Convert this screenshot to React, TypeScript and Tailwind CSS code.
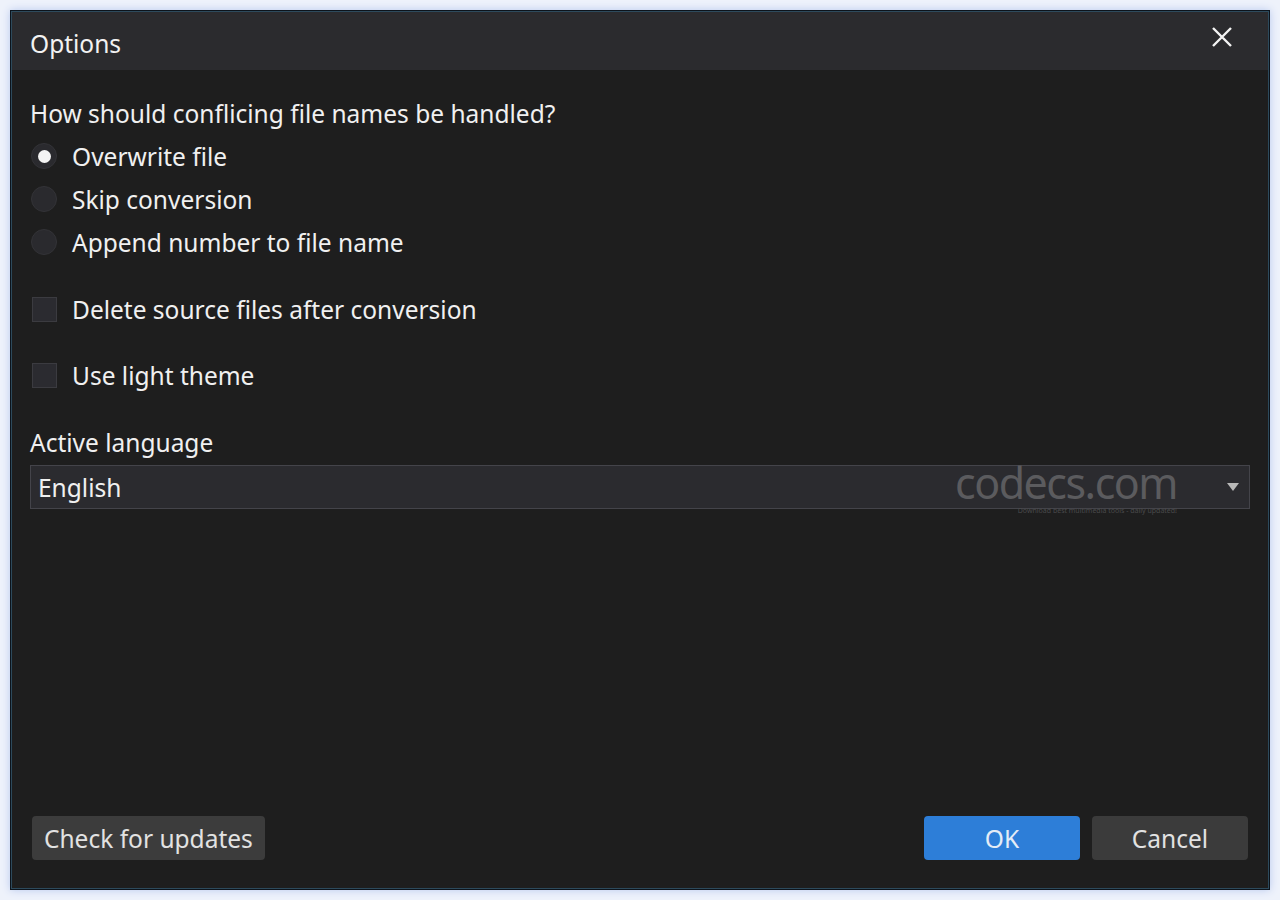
import { useState } from "react";

const font = { fontFamily: '"Noto Sans", "Open Sans", sans-serif' };

const Radio = ({ checked, label, onClick }: { checked: boolean; label: string; onClick: () => void }) => (
  <div className="flex items-center h-[43px] cursor-pointer" onClick={onClick}>
    <div className="w-[26px] h-[26px] rounded-full bg-[#2a2a2e] border border-[#333337] flex items-center justify-center ml-[1px] -mt-[3px]">
      {checked && <div className="w-[13px] h-[13px] rounded-full bg-[#f4f4f4]" />}
    </div>
    <span className="ml-[15px] text-[24.5px] text-[#f0f0f0]">{label}</span>
  </div>
);

const Check = ({ label }: { label: string }) => {
  const [on, setOn] = useState(false);
  return (
    <div className="flex items-center h-[43px] cursor-pointer" onClick={() => setOn(!on)}>
      <div className="w-[25px] h-[25px] bg-[#2b2b30] border border-[#3b3b40] ml-[2px] -mt-[3px] flex items-center justify-center text-white text-sm">
        {on ? "✓" : ""}
      </div>
      <span className="ml-[15px] text-[24.5px] text-[#f0f0f0]">{label}</span>
    </div>
  );
};

export default function App() {
  const [mode, setMode] = useState(0);
  const options = ["Overwrite file", "Skip conversion", "Append number to file name"];

  return (
    <div className="w-[1280px] h-[900px] bg-[#eef2fb] pt-[10px] pl-[10px]" style={font}>
      <div className="w-[1260px] h-[880px] border border-[#0c141c] shadow-[0_0_8px_#b8c8ee]">
        <div className="w-full h-full border border-[#2d4a5c] flex flex-col bg-[#1e1e1e]">
          {/* title bar */}
          <div className="h-[58px] bg-[#2b2b2e] flex items-center justify-between pl-[18px] pr-[36px]">
            <span className="text-[24.5px] text-[#f2f2f2] mt-[7px]">Options</span>
            <svg width="20" height="20" viewBox="0 0 20 20" className="mb-[8px]">
              <path d="M1 1 L19 19 M19 1 L1 19" stroke="#f4f4f4" strokeWidth="2.4" />
            </svg>
          </div>

          <div className="flex-1 flex flex-col px-[18px] pt-[23px]">
            <div className="text-[24.5px] text-[#f0f0f0] h-[43px] flex items-center">
              How should conflicing file names be handled?
            </div>
            {options.map((o, i) => (
              <Radio key={o} label={o} checked={mode === i} onClick={() => setMode(i)} />
            ))}
            <div className="mt-[24px]">
              <Check label="Delete source files after conversion" />
            </div>
            <div className="mt-[23px]">
              <Check label="Use light theme" />
            </div>
            <div className="text-[24.5px] text-[#f0f0f0] h-[43px] flex items-center mt-[24px]">
              Active language
            </div>
            <div className="relative h-[44px] bg-[#2b2b2f] border border-[#44444a] flex items-center justify-between pl-[7px] pr-[10px]">
              <span className="text-[24.5px] text-[#f0f0f0] mt-[2px]">English</span>
              <svg width="12" height="8" viewBox="0 0 12 8">
                <path d="M0 0 L12 0 L6 8 Z" fill="#b8b8b8" />
              </svg>
              {/* watermark */}
              <div className="absolute left-[920px] top-[-5px] w-[226px] flex flex-col items-end pointer-events-none">
                <span className="text-[43px] leading-[44px] text-[#5b5b5e] tracking-[-1.5px]">codecs.com</span>
                <span className="text-[7px] leading-[8px] text-[#4a4a4c] mt-[2px]">
                  Download best multimedia tools - daily updated!
                </span>
              </div>
            </div>

            <div className="flex-1" />

            <div className="flex items-center justify-between pb-[28px] pl-[2px] pr-[2px]">
              <button className="h-[44px] px-[12px] pt-[3px] bg-[#3c3c3c] rounded-[4px] text-[24.5px] text-[#e2e2e2]">
                Check for updates
              </button>
              <div className="flex gap-[12px]">
                <button className="h-[44px] w-[156px] pt-[3px] bg-[#2d7ed8] rounded-[4px] text-[24.5px] text-[#e4ecf6]">OK</button>
                <button className="h-[44px] w-[156px] pt-[3px] bg-[#3b3b3b] rounded-[4px] text-[24.5px] text-[#e2e2e2]">Cancel</button>
              </div>
            </div>
          </div>
        </div>
      </div>
    </div>
  );
}
